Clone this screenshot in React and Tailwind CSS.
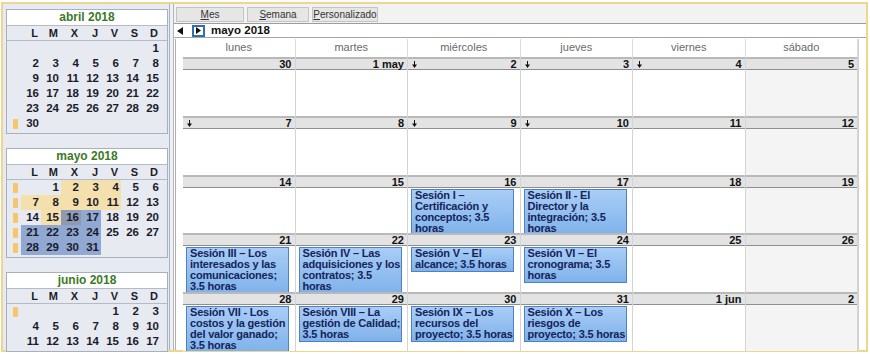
import React from 'react';

const FONT = "font-['Liberation_Sans',Arial,sans-serif]";

// mini calendars: null = empty cell, hl: t = tan, g = gray, b = blue
const miniMonths = [
  {
    title: 'abril 2018',
    mt: 'mt-[5px]',
    rows: [
      { mark: false, days: [null, null, null, null, null, null, '1'] },
      { mark: false, days: ['2', '3', '4', '5', '6', '7', '8'] },
      { mark: false, days: ['9', '10', '11', '12', '13', '14', '15'] },
      { mark: false, days: ['16', '17', '18', '19', '20', '21', '22'] },
      { mark: false, days: ['23', '24', '25', '26', '27', '28', '29'] },
      { mark: true, days: ['30', null, null, null, null, null, null] },
    ],
  },
  {
    title: 'mayo 2018',
    mt: 'mt-[14px]',
    rows: [
      { mark: true, days: [null, '1', '2t', '3t', '4t', '5', '6'] },
      { mark: true, days: ['7t', '8t', '9t', '10t', '11t', '12', '13'] },
      { mark: true, days: ['14', '15t', '16g', '17b', '18', '19', '20'] },
      { mark: true, days: ['21b', '22b', '23b', '24b', '25', '26', '27'] },
      { mark: true, days: ['28b', '29b', '30b', '31b', null, null, null] },
    ],
  },
  {
    title: 'junio 2018',
    mt: 'mt-[14px]',
    rows: [
      { mark: true, days: [null, null, null, null, '1', '2', '3'] },
      { mark: false, days: ['4', '5', '6', '7', '8', '9', '10'] },
      { mark: false, days: ['11', '12', '13', '14', '15', '16', '17'] },
    ],
  },
];

const hlClass = {
  t: 'bg-[#f3e0ac]',
  g: 'bg-[#8d9ab2]',
  b: 'bg-[#91a9d2]',
};

const dow = ['L', 'M', 'X', 'J', 'V', 'S', 'D'];

const MiniMonth = ({ month }) => (
  <div className={`${month.mt} w-[162px] border border-[#a7b0c0] bg-[#e7ebf1]`}>
    <div className="h-[15px] bg-white text-center text-[12px] font-bold leading-[15px] text-[#3c7a25]">
      {month.title}
    </div>
    <div className="grid h-[16px] grid-cols-[14px_repeat(7,20px)] border-y border-[#b3bac8] text-[11px] font-bold leading-[15px] text-[#1c1c28]">
      <div />
      {dow.map((d) => (
        <div key={d} className="pr-[3px] text-right">{d}</div>
      ))}
    </div>
    <div className="pb-[2px]">
      {month.rows.map((row, i) => (
        <div key={i} className="grid h-[15px] grid-cols-[14px_repeat(7,20px)] text-[11.5px] font-bold leading-[15px] text-[#1a1a2a]">
          <div className="flex items-center justify-center pl-[2px]">
            {row.mark && <div className="h-[10px] w-[5px] rounded-[1px] bg-[#f5c66c]" />}
          </div>
          {row.days.map((d, j) => {
            if (!d) return <div key={j} />;
            const hl = d.slice(-1);
            const num = d.replace(/[tgb]$/, '');
            return (
              <div key={j} className={`pr-[2px] text-right ${hlClass[hl] || ''}`}>
                {num}
              </div>
            );
          })}
        </div>
      ))}
    </div>
  </div>
);

const events = {
  16: ['Sesión I –', 'Certificación y', 'conceptos; 3.5', 'horas'],
  17: ['Sesión II - El', 'Director y la', 'integración; 3.5', 'horas'],
  21: ['Sesión III – Los', 'interesados y las', 'comunicaciones;', '3.5 horas'],
  22: ['Sesión IV – Las', 'adquisiciones y los', 'contratos; 3.5', 'horas'],
  23: ['Sesión V – El', 'alcance; 3.5 horas'],
  24: ['Sesión VI – El', 'cronograma; 3.5', 'horas'],
  28: ['Sesión VII - Los', 'costos y la gestión', 'del valor ganado;', '3.5 horas'],
  29: ['Sesión VIII – La', 'gestión de Calidad;', '3.5 horas'],
  30: ['Sesión IX – Los', 'recursos del', 'proyecto; 3.5 horas'],
  31: ['Sesión X – Los', 'riesgos de', 'proyecto; 3.5 horas'],
};

// [label, arrow, eventKey]
const weeks = [
  { h: 'h-[59px]', days: [['30'], ['1 may'], ['2', 1], ['3', 1], ['4', 1], ['5']] },
  { h: 'h-[59px]', days: [['7', 1], ['8'], ['9', 1], ['10', 1], ['11'], ['12']] },
  { h: 'h-[58px]', days: [['14'], ['15'], ['16', 0, 16], ['17', 0, 17], ['18'], ['19']] },
  { h: 'h-[59px]', days: [['21', 0, 21], ['22', 0, 22], ['23', 0, 23], ['24', 0, 24], ['25'], ['26']] },
  { h: 'h-[59px]', days: [['28', 0, 28], ['29', 0, 29], ['30', 0, 30], ['31', 0, 31], ['1 jun'], ['2']] },
];

const dayNames = ['lunes', 'martes', 'miércoles', 'jueves', 'viernes', 'sábado'];

const DownArrow = () => (
  <svg width="5" height="7" viewBox="0 0 5 7" className="shrink-0">
    <rect x="2" y="0" width="1" height="4" fill="#111" />
    <path d="M0 3.5 L5 3.5 L2.5 7 Z" fill="#111" />
  </svg>
);

const DayCell = ({ label, arrow, evKey, sat }) => {
  const ev = evKey ? events[evKey] : null;
  return (
    <div className="flex min-w-0 flex-col overflow-hidden border-r border-[#d4d4d4]">
      <div className="flex h-[13px] shrink-0 items-center justify-between border-t-2 border-b border-t-[#b9b9b9] border-b-[#8e8e8e] bg-[#e3e3e3] pl-[4px] pr-[3px] text-[11px] font-bold leading-[10px] text-[#111]">
        <span>{arrow ? <DownArrow /> : null}</span>
        <span>{label}</span>
      </div>
      <div className={`flex-1 overflow-hidden ${sat ? 'bg-[#f4f4f4]' : 'bg-white'}`}>
        {ev && (
          <div className="ml-[3px] mt-[1px] w-[103px] border border-[#4c82c4] bg-gradient-to-b from-[#a9cdf6] to-[#7fb2ea] px-[3px] pb-[1px] text-[11px] font-bold leading-[11px] tracking-[-0.2px] whitespace-nowrap text-[#14245a]">
            {ev.map((l, i) => (
              <div key={i}>{l}</div>
            ))}
          </div>
        )}
      </div>
    </div>
  );
};

const TabBtn = ({ first, rest, w }) => (
  <div className={`${w} flex h-[15px] items-center justify-center border border-[#c4c4c4] bg-[#e6e6e6] text-[10px] leading-none text-[#333]`}>
    <span className="underline">{first}</span>
    {rest}
  </div>
);

export default function App() {
  return (
    <div className={`h-[354px] w-[870px] overflow-hidden bg-white ${FONT}`}>
      <div className="ml-[1px] mt-[2px] flex h-[350px] w-[867px] border-2 border-[#efd68f] bg-[#e7ebf1]">
        {/* left: mini calendars */}
        <div className="h-full w-[167px] shrink-0 border-r border-[#aab3c2] pl-[3px]">
          {miniMonths.map((m) => (
            <MiniMonth key={m.title} month={m} />
          ))}
        </div>
        <div className="h-full w-[4px] shrink-0 border-r border-[#b4b4b4] bg-[#edf0f4]" />

        {/* main */}
        <div className="flex min-w-0 flex-1 flex-col bg-white">
          <div className="flex h-[20px] shrink-0 items-end gap-[3px] border-b border-[#9c9c9c] bg-[#f2f2f2] pb-[1px] pl-[2px]">
            <TabBtn first="M" rest="es" w="w-[68px]" />
            <TabBtn first="S" rest="emana" w="w-[62px]" />
            <TabBtn first="P" rest="ersonalizado" w="w-[66px]" />
          </div>
          <div className="flex h-[14px] shrink-0 items-center gap-[5px] border-b border-[#a6a6a6] pl-[3px]">
            <svg width="6" height="8" viewBox="0 0 6 8"><path d="M6 0 L0 4 L6 8 Z" fill="#111" /></svg>
            <div className="ml-[4px] flex h-[12px] w-[13px] items-center justify-center border-2 border-[#2f6db5] bg-white">
              <svg width="5" height="7" viewBox="0 0 5 7"><path d="M0 0 L5 3.5 L0 7 Z" fill="#111" /></svg>
            </div>
            <span className="ml-[1px] text-[11.5px] font-bold text-[#111]">mayo 2018</span>
          </div>

          <div className="ml-[1px] mt-[1px] flex min-h-0 flex-1 border-l border-[#b0b0b0]">
            <div className="w-[7px] shrink-0" />
            <div className="flex w-[676px] flex-col border-r border-[#d0d0d0]">
              <div className="grid h-[18px] shrink-0 grid-cols-6 text-[11px] leading-[17px] text-[#6a6a6a]">
                {dayNames.map((n) => (
                  <div key={n} className="border-r border-[#dcdcdc] text-center">{n}</div>
                ))}
              </div>
              {weeks.map((w, i) => (
                <div key={i} className={`grid ${w.h} shrink-0 grid-cols-6`}>
                  {w.days.map(([label, arrow, evKey], j) => (
                    <DayCell key={j} label={label} arrow={arrow} evKey={evKey} sat={j === 5} />
                  ))}
                </div>
              ))}
            </div>
          </div>
        </div>
      </div>
    </div>
  );
}
